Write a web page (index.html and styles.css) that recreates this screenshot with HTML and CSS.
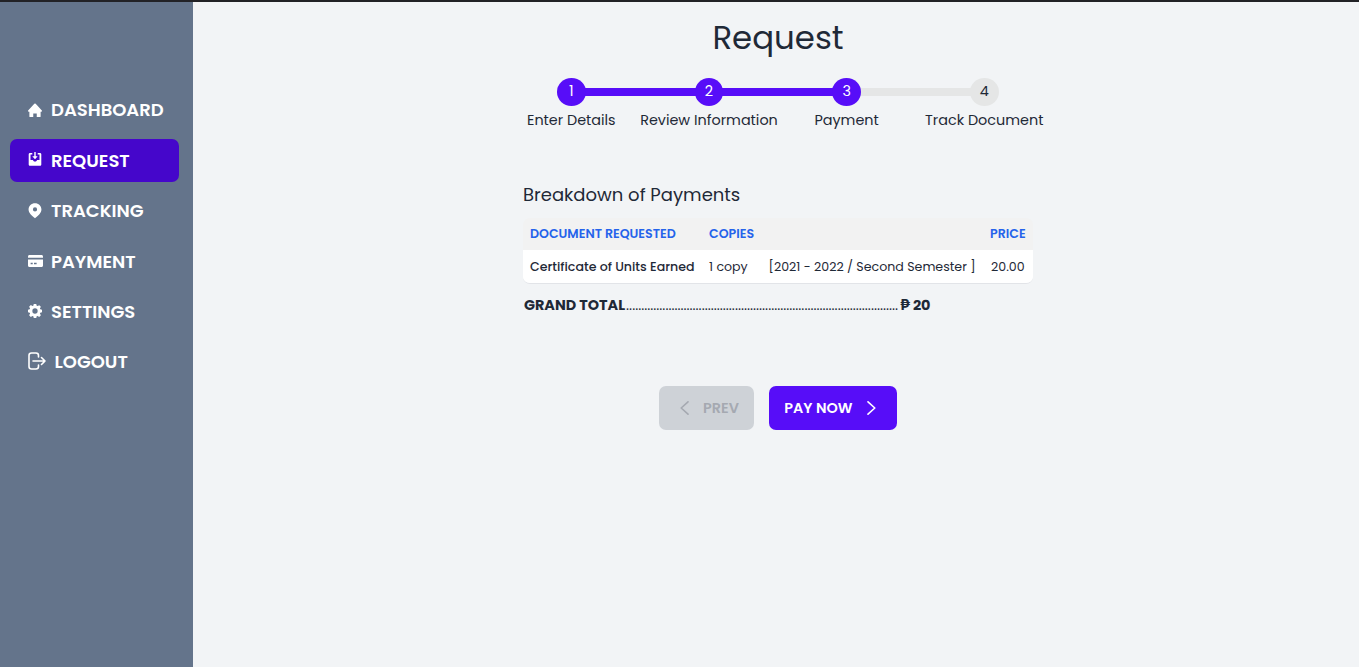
FILE: index.html
```html
<!DOCTYPE html>
<html lang="en">
<head>
<meta charset="utf-8">
<title>Request</title>
<link rel="stylesheet" href="styles.css">
</head>
<body>
<div class="app">
  <nav class="sidebar">
    <a class="item"><svg class="icon icon-home" viewBox="0 0 20 20"><path d="M9 .8q1-.9 2 0L19.800 10.200c.5.8.1 1.800-.8 1.800H18v6.800c0 .6-.4 1.200-1 1.200H12.500v-5.500h-5V20H3c-.6 0-1-.6-1-1.200V12H1c-.9 0-1.300-1-.8-1.800z"/></svg><span>DASHBOARD</span></a>
    <a class="item active"><svg class="icon icon-request" viewBox="0 0 14 14"><path d="M2 1h2.300v1.500H2.500V8h2.300l1.200 1.500h2L9.200 8h2.300V2.500H9.700V1H12c.7 0 1.300.6 1.300 1.300v10.200c0 .7-.6 1.300-1.300 1.300H2c-.7 0-1.300-.6-1.300-1.300V2.300C.7 1.600 1.300 1 2 1z"/><path d="M6.300 0h1.400v4.300h2L7 7.300 4.300 4.300h2z"/></svg><span>REQUEST</span></a>
    <a class="item"><svg class="icon icon-pin" viewBox="0 0 20 22"><path fill-rule="evenodd" d="M10 .3C4.900.3.800 4.200.800 9.200c0 5 4.500 8.600 9.200 12.500 4.700-3.900 9.200-7.500 9.200-12.500C19.200 4.200 15.100.3 10 .3zM10 6.200a3 3 0 1 1 0 6 3 3 0 0 1 0-6z"/></svg><span>TRACKING</span></a>
    <a class="item payment"><svg class="icon icon-card" viewBox="0 0 20 16"><path d="M2 0h16c1.200 0 2 .8 2 2v1.500H0V2C0 .8.8 0 2 0z"/><path fill-rule="evenodd" d="M0 6h20v8c0 1.200-.8 2-2 2H2c-1.200 0-2-.8-2-2zM3.500 10.300v2h2.800v-2zm4.500 0v2h3.500v-2z"/></svg><span>PAYMENT</span></a>
    <a class="item"><svg class="icon icon-gear" viewBox="0 0 20 20"><path fill-rule="evenodd" d="M8.200 0h3.600l.6 2.500 1.300.5L16 1.700 18.400 4 17 6.300l.6 1.300 2.400.6v3.600l-2.400.6-.6 1.300 1.400 2.300-2.400 2.400-2.300-1.400-1.300.6-.6 2.400H8.200l-.6-2.400-1.300-.6L4 18.400 1.600 16 3 13.700l-.6-1.300L0 11.800V8.200l2.400-.6L3 6.300 1.600 4 4 1.600 6.300 3l1.300-.6zM10 6.200a3.800 3.800 0 1 0 0 7.600 3.800 3.800 0 0 0 0-7.600z"/></svg><span>SETTINGS</span></a>
    <a class="item logout"><svg class="icon-logout" viewBox="0 0 18 18"><path d="M10.500 5V3.500c0-1.500-.7-2.500-2.500-2.500H3.500C1.700 1 1 2 1 3.500v11C1 16 1.700 17 3.500 17H8c1.800 0 2.500-1 2.500-2.500V13M5 9h12M13.500 5.500 17 9l-3.500 3.500"/></svg><span>LOGOUT</span></a>
  </nav>
  <main class="main">
    <h1 class="title">Request</h1>
    <ol class="steps">
      <li class="step done"><span class="dot">1</span><span>Enter Details</span></li>
      <li class="step done"><span class="dot">2</span><span>Review Information</span></li>
      <li class="step done"><span class="dot">3</span><span>Payment</span></li>
      <li class="step"><span class="dot">4</span><span>Track Document</span></li>
    </ol>
    <section class="breakdown">
      <h2 class="heading">Breakdown of Payments</h2>
      <div class="table">
        <div class="row head"><span>DOCUMENT REQUESTED</span><span>COPIES</span><span></span><span>PRICE</span></div>
        <div class="row"><span class="name">Certificate of Units Earned</span><span>1 copy</span><span>[2021 - 2022 / Second Semester ]</span><span class="amount">20.00</span></div>
      </div>
      <div class="total"><span>GRAND TOTAL</span><span class="leader">..........................................................................................</span><span class="sum">₱ 20</span></div>
    </section>
    <div class="actions">
      <button class="btn prev" disabled><svg class="chevron" viewBox="0 0 9 14"><path d="M8 .8 1.200 7 8 13.200"/></svg><span>PREV</span></button>
      <button class="btn pay"><span>PAY NOW</span><svg class="chevron" viewBox="0 0 9 14"><path d="M1 .8 7.800 7 1 13.200"/></svg></button>
    </div>
  </main>
</div>
</body>
</html>
```
FILE: styles.css
```css
* { box-sizing: border-box; }
body {
  margin: 0;
  font-family: Poppins, Inter, "Open Sans", sans-serif;
  color: #1f2937;
  background: #f2f4f6;
}
.app { display: flex; height: 667px; border-top: 2px solid #222226; }
.sidebar {
  width: 193px;
  flex: none;
  padding: 86.3px 14px 0 10px;
  background: #64748b;
  display: flex;
  flex-direction: column;
  gap: 7.4px;
}
.item {
  height: 43px;
  padding-left: 18px;
  border-radius: 7px;
  display: flex;
  align-items: center;
  gap: 9px;
  color: #fff;
  font-size: 18px;
  font-weight: 600;
  white-space: nowrap;
}
.active { background: #4506cb; }
.payment { margin: .4px 0 -.4px; }
.logout { gap: 9.5px; margin-top: -.3px; }
.icon { width: 14px; height: 14px; fill: #fff; flex: none; }
.icon-home { height: 14.5px; }
.icon-request { margin-bottom: 2px; }
.icon-pin { height: 15.4px; margin-top: 1px; }
.icon-card { width: 15px; height: 12px; margin: 0 -.5px; }
.icon-gear { margin-bottom: 1px; }
.icon-logout { width: 18px; height: 18px; margin-left: -.5px; margin-right: -.5px; fill: none; stroke: #fff; stroke-width: 1.6; stroke-linecap: round; stroke-linejoin: round; flex: none; }
.main { flex: 1; padding-left: 4px; }
.title { margin: 11px 0 0; height: 50px; line-height: 50px; font-size: 32.4px; font-weight: 400; text-align: center; }
.steps { list-style: none; width: 551px; margin: 15px auto 0; padding: 0 .4px 0 0; display: grid; grid-template-columns: repeat(4, 1fr); }
.step { position: relative; display: flex; flex-direction: column; align-items: center; font-size: 14.4px; line-height: 28px; white-space: nowrap; }
.step + .step::before { content: ""; position: absolute; top: 10px; left: -50%; width: 100%; height: 8px; background: #e5e6e6; }
.step.done::before { background: #570df8; }
.dot { position: relative; z-index: 1; width: 28.8px; height: 28px; border-radius: 50%; background: #e5e6e6; text-align: center; line-height: 27px; }
.done .dot { z-index: 2; background: #570df8; color: #fff; }
.breakdown { width: 510px; margin: 47px auto 0; }
.heading { margin: 0; height: 37px; line-height: 27px; font-size: 18px; font-weight: 400; }
.table { border-bottom: 1px solid #e2e4e8; border-radius: 7px; overflow: hidden; font-size: 12.6px; }
.row { display: grid; grid-template-columns: 179px 59.6px 221.400px 1fr; align-items: center; height: 33px; padding-left: 7px; background: #fff; white-space: nowrap; }
.head { height: 32px; background: #f2f2f2; color: #2563eb; font-weight: 600; }
.name { font-weight: 500; }
.amount { padding-left: 1px; }
.total { display: flex; align-items: center; height: 22px; margin-top: 10px; padding-left: 1px; font-size: 14.4px; font-weight: 700; white-space: nowrap; }
.leader { margin: 0 2px 0 1px; font-weight: 400; }
.sum { letter-spacing: -.25px; }
.actions { display: flex; justify-content: center; gap: 15px; margin-top: 70px; }
.btn { height: 44px; padding: 0; border: 0; border-radius: 7px; display: flex; align-items: center; font: inherit; font-size: 14.4px; font-weight: 600; white-space: nowrap; }
.prev { width: 95px; padding-left: 21px; gap: 14px; color: #a5a9b1; background: #ced2d7; }
.pay { width: 128px; padding-left: 15.300px; gap: 14px; color: #fff; background: #570df8; }
.chevron { width: 9px; height: 14px; fill: none; stroke: currentColor; stroke-width: 1.6; stroke-linecap: round; stroke-linejoin: round; }
```
